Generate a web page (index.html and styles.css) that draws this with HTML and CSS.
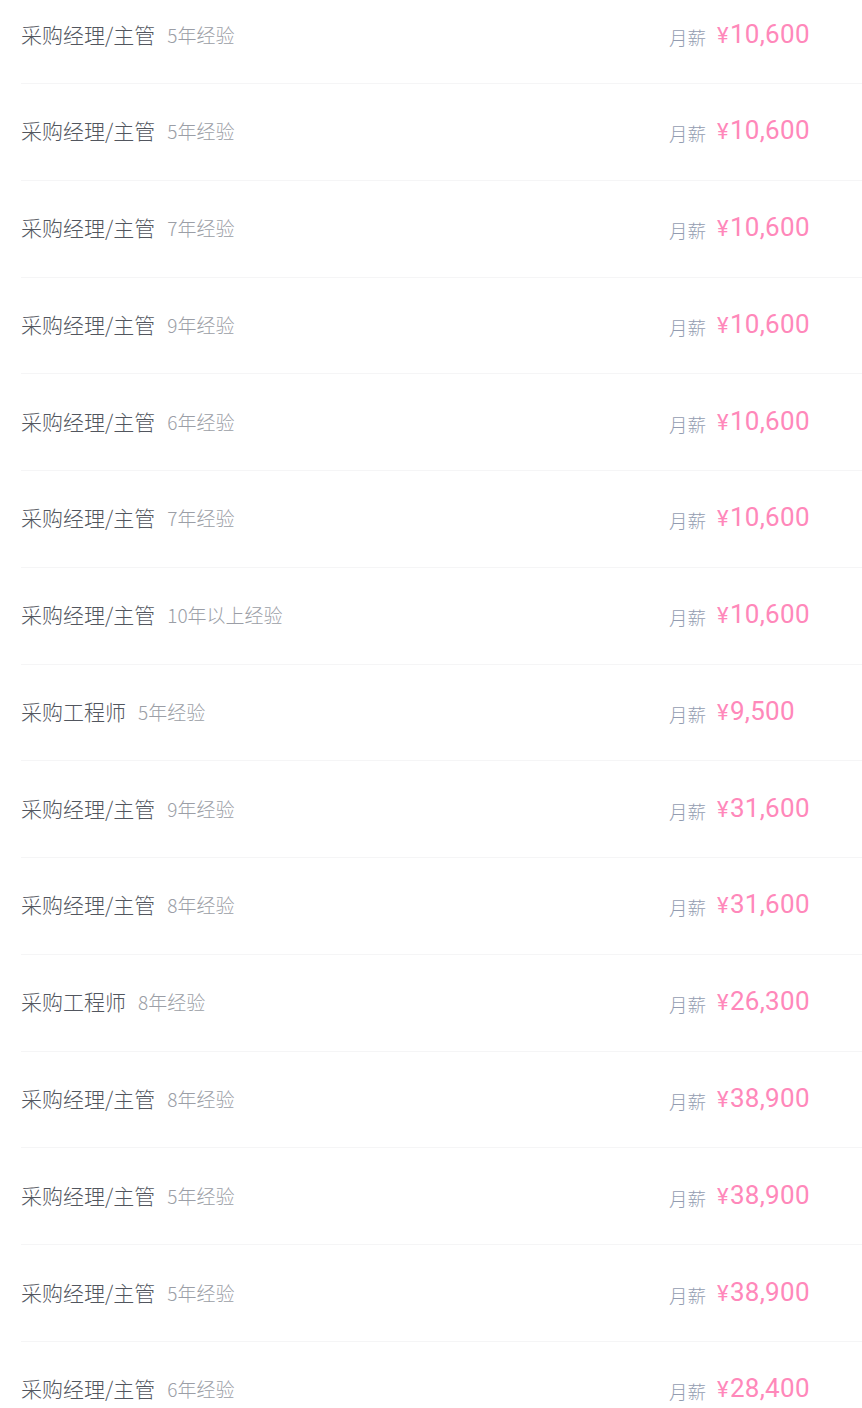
FILE: index.html
```html
<!DOCTYPE html>
<html lang="zh-CN">
<head>
<meta charset="utf-8">
<title>薪资列表</title>
<link rel="stylesheet" href="styles.css">
</head>
<body>
<ul class="list">
  <li class="row"><div class="left"><span class="title">采购经理/主管</span><span class="exp">5年经验</span></div><div class="right"><span class="label">月薪</span><span class="price"><span class="yen">¥</span>10,600</span></div></li>
  <li class="row"><div class="left"><span class="title">采购经理/主管</span><span class="exp">5年经验</span></div><div class="right"><span class="label">月薪</span><span class="price"><span class="yen">¥</span>10,600</span></div></li>
  <li class="row"><div class="left"><span class="title">采购经理/主管</span><span class="exp">7年经验</span></div><div class="right"><span class="label">月薪</span><span class="price"><span class="yen">¥</span>10,600</span></div></li>
  <li class="row"><div class="left"><span class="title">采购经理/主管</span><span class="exp">9年经验</span></div><div class="right"><span class="label">月薪</span><span class="price"><span class="yen">¥</span>10,600</span></div></li>
  <li class="row"><div class="left"><span class="title">采购经理/主管</span><span class="exp">6年经验</span></div><div class="right"><span class="label">月薪</span><span class="price"><span class="yen">¥</span>10,600</span></div></li>
  <li class="row"><div class="left"><span class="title">采购经理/主管</span><span class="exp">7年经验</span></div><div class="right"><span class="label">月薪</span><span class="price"><span class="yen">¥</span>10,600</span></div></li>
  <li class="row"><div class="left"><span class="title">采购经理/主管</span><span class="exp">10年以上经验</span></div><div class="right"><span class="label">月薪</span><span class="price"><span class="yen">¥</span>10,600</span></div></li>
  <li class="row"><div class="left"><span class="title">采购工程师</span><span class="exp">5年经验</span></div><div class="right"><span class="label">月薪</span><span class="price"><span class="yen">¥</span>9,500</span></div></li>
  <li class="row"><div class="left"><span class="title">采购经理/主管</span><span class="exp">9年经验</span></div><div class="right"><span class="label">月薪</span><span class="price"><span class="yen">¥</span>31,600</span></div></li>
  <li class="row"><div class="left"><span class="title">采购经理/主管</span><span class="exp">8年经验</span></div><div class="right"><span class="label">月薪</span><span class="price"><span class="yen">¥</span>31,600</span></div></li>
  <li class="row"><div class="left"><span class="title">采购工程师</span><span class="exp">8年经验</span></div><div class="right"><span class="label">月薪</span><span class="price"><span class="yen">¥</span>26,300</span></div></li>
  <li class="row"><div class="left"><span class="title">采购经理/主管</span><span class="exp">8年经验</span></div><div class="right"><span class="label">月薪</span><span class="price"><span class="yen">¥</span>38,900</span></div></li>
  <li class="row"><div class="left"><span class="title">采购经理/主管</span><span class="exp">5年经验</span></div><div class="right"><span class="label">月薪</span><span class="price"><span class="yen">¥</span>38,900</span></div></li>
  <li class="row"><div class="left"><span class="title">采购经理/主管</span><span class="exp">5年经验</span></div><div class="right"><span class="label">月薪</span><span class="price"><span class="yen">¥</span>38,900</span></div></li>
  <li class="row"><div class="left"><span class="title">采购经理/主管</span><span class="exp">6年经验</span></div><div class="right"><span class="label">月薪</span><span class="price"><span class="yen">¥</span>28,400</span></div></li>
</ul>
</body>
</html>
```
FILE: styles.css
```css
html, body {
  margin: 0;
  padding: 0;
  background: #ffffff;
}
body {
  font-family: "Noto Sans CJK SC", "Noto Sans", sans-serif;
  overflow: hidden;
}
.list {
  list-style: none;
  margin: -12.8px 0 0 0;
  padding: 0 0 0 21px;
}
.row {
  box-sizing: border-box;
  height: 96.77px;
  padding-bottom: 3px;
  border-bottom: 1px solid #f5f5f6;
  display: flex;
  align-items: center;
  justify-content: space-between;
}
.left {
  display: flex;
  align-items: baseline;
  gap: 12px;
}
.title {
  font-size: 21px;
  font-weight: 300;
  color: #52565e;
}
.exp {
  font-size: 19px;
  font-weight: 300;
  color: #9b9ea6;
}
.right {
  width: 193px;
  display: flex;
  align-items: baseline;
  gap: 11px;
}
.label {
  font-size: 18.5px;
  font-weight: 300;
  color: #939cb0;
  position: relative;
  top: 2px;
}
.price {
  font-family: Roboto, "Noto Sans", sans-serif;
  font-size: 26px;
  font-weight: 400;
  letter-spacing: 0.3px;
  color: #ff88ba;
}
.yen {
  font-size: 22px;
  margin-right: 1px;
}
```
